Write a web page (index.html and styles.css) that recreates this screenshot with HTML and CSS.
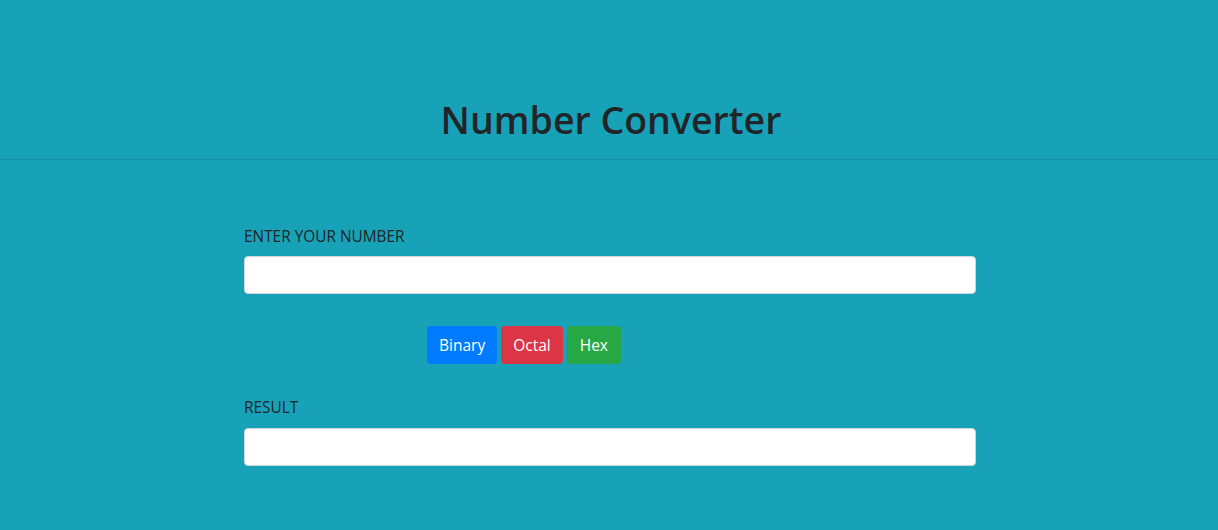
FILE: index.html
```html
<!DOCTYPE html>
<html>
<head>
<meta charset="utf-8">
<link rel="stylesheet" href="styles.css">
</head>
<body>
<header class="header">
  <h1 class="title">Number Converter</h1>
</header>
<main class="main">
  <div class="field">
    <label class="label" for="num">ENTER YOUR NUMBER</label>
    <input class="input" id="num" type="text">
  </div>
  <div class="buttons">
    <button class="btn btn-blue">Binary</button>
    <button class="btn btn-red">Octal</button>
    <button class="btn btn-green">Hex</button>
  </div>
  <div class="field">
    <label class="label label-result" for="res">RESULT</label>
    <input class="input" id="res" type="text">
  </div>
</main>
</body>
</html>
```
FILE: styles.css
```css
html, body {
  margin: 0;
  padding: 0;
  background: #17a2b8;
  height: 100%;
}
body {
  font-family: "Open Sans", "Noto Sans", sans-serif;
  color: #212529;
}
.header {
  padding-top: 94px;
  padding-bottom: 13px;
  padding-left: 4px;
  border-bottom: 1px solid rgba(0,0,0,0.1);
  text-align: center;
}
.title {
  margin: 0;
  font-size: 37.5px;
  font-weight: 600;
  line-height: 52px;
}
.main {
  width: 732px;
  margin-left: calc(50% - 365px);
  padding-top: 66px;
}
.field {
  display: flex;
  flex-direction: column;
}
.label {
  font-size: 15.4px;
  line-height: 22px;
  margin-bottom: 8px;
}
.label-result {
  margin-bottom: 9px;
}
.input {
  height: 38px;
  box-sizing: border-box;
  border: 1px solid #ced4da;
  border-radius: 4px;
  background: #fff;
  margin: 0;
}
.buttons {
  display: flex;
  gap: 4px;
  margin: 32px 0 33px 183px;
}
.btn {
  height: 38px;
  padding: 0 12px;
  border: none;
  border-radius: 4px;
  color: #fff;
  font-family: "Open Sans", "Noto Sans", sans-serif;
  font-size: 15.5px;
}
.btn-blue { background: #007bff; }
.btn-red { background: #dc3545; }
.btn-green { background: #28a745; padding: 0 13px; }
```
